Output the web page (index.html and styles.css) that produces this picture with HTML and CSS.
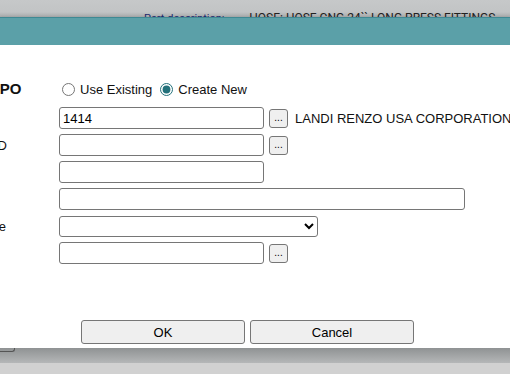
FILE: index.html
```html
<!DOCTYPE html>
<html lang="en">

<head>
    <meta charset="UTF-8">
    <meta name="viewport" content="width=device-width, initial-scale=1.0">
    <title>Create PO</title>
    <link rel="stylesheet" href="styles.css">
</head>

<body>
    <div class="page-top">
        <span class="part-label">Part description:</span>
        <span class="part-value">HOSE: HOSE CNG 24`` LONG PRESS FITTINGS</span>
    </div>

    <div class="dialog">
        <div class="titlebar"></div>
        <div class="dialog-body">
            <div class="form">
                <div class="label title">Create PO</div>
                <div class="field radios">
                    <input type="radio" name="mode" id="existing">
                    <label for="existing">Use Existing</label>
                    <input type="radio" name="mode" id="new" checked>
                    <label for="new">Create New</label>
                </div>

                <div class="label">Vendor</div>
                <div class="field">
                    <input type="text" class="txt" value="1414">
                    <button class="dots">...</button>
                    <span class="vendor-name">LANDI RENZO USA CORPORATION</span>
                </div>

                <div class="label">Vendor ID</div>
                <div class="field">
                    <input type="text" class="txt">
                    <button class="dots">...</button>
                </div>

                <div class="label">PO #</div>
                <div class="field">
                    <input type="text" class="txt">
                </div>

                <div class="label">Notes</div>
                <div class="field">
                    <input type="text" class="txt wide">
                </div>

                <div class="label">Ship Date</div>
                <div class="field">
                    <select class="sel">
                        <option></option>
                    </select>
                </div>

                <div class="label">Buyer</div>
                <div class="field">
                    <input type="text" class="txt">
                    <button class="dots">...</button>
                </div>
            </div>

            <div class="actions">
                <button class="btn">OK</button>
                <button class="btn">Cancel</button>
            </div>
        </div>
    </div>

    <div class="page-bottom">
        <div class="ghost-btn"></div>
    </div>
</body>

</html>
```

FILE: styles.css
```css
* {
    margin: 0;
    padding: 0;
    box-sizing: border-box;
}

html,
body {
    height: 100%;
    width: 100%;
    overflow: hidden;
}

body {
    background: #d1d1d1;
    font-family: "Liberation Sans", Arial, sans-serif;
    font-size: 13px;
    color: #111;
}

.page-top {
    height: 17px;
    overflow: hidden;
    background: linear-gradient(#c6c8c9, #c2c4c5 70%, #a9abac);
    padding-top: 10px;
    white-space: nowrap;
    font-family: Roboto, "Liberation Sans", sans-serif;
}

.part-label {
    display: inline-block;
    width: 102px;
    margin-left: 144px;
    font-size: 11px;
    color: #1d2a6e;
}

.part-value {
    font-size: 12px;
    color: #222;
}

.dialog {
    width: 100%;
    box-shadow: 0 2px 4px rgba(0, 0, 0, 0.35);
    position: relative;
}

.titlebar {
    height: 28px;
    background: #5ba0a8;
    border-top: 1px solid #3f8993;
}

.dialog-body {
    height: 303px;
    background: #fff;
    display: flex;
    flex-direction: column;
    padding-top: 33px;
    padding-bottom: 4px;
}

.form {
    display: grid;
    grid-template-columns: 110px 1fr;
    grid-template-rows: 24px;
    grid-auto-rows: 22px;
    row-gap: 5px;
    margin-left: -51px;
    align-items: center;
}

.form .title,
.form .radios {
    align-self: start;
    height: 22px;
}

.label {
    white-space: nowrap;
}

.label.title {
    font-size: 15px;
    font-weight: bold;
    line-height: 22px;
}

.field {
    display: flex;
    align-items: center;
    white-space: nowrap;
}

.radios input {
    width: 13px;
    height: 13px;
    margin: 0 5px 0 3px;
    accent-color: #23717b;
}

.radios input + label + input {
    margin-left: 8px;
}

.txt {
    width: 205px;
    height: 22px;
    border: 1px solid #767676;
    border-radius: 3px;
    padding: 0 3px;
    font: 13px "Liberation Sans", Arial, sans-serif;
    color: #000;
}

.txt.wide {
    width: 406px;
}

.sel {
    width: 259px;
    height: 21px;
    border: 1px solid #767676;
    border-radius: 3px;
    background: #fff;
    font: 13px "Liberation Sans", Arial, sans-serif;
}

.dots {
    width: 19px;
    height: 19px;
    margin-left: 5px;
    border: 1px solid #767676;
    border-radius: 3px;
    background: #efefef;
    font: 10px "Liberation Sans", Arial, sans-serif;
    line-height: 14px;
    color: #000;
}

.vendor-name {
    margin-left: 7px;
}

.actions {
    margin-top: auto;
    padding-left: 81px;
    display: flex;
    gap: 5px;
}

.btn {
    width: 164px;
    height: 24px;
    border: 1px solid #767676;
    border-radius: 3px;
    background: #efefef;
    font: 13px "Liberation Sans", Arial, sans-serif;
    color: #000;
}

.page-bottom {
    height: 15px;
    background: linear-gradient(#8f9293, #b5b7b8);
    position: relative;
}

.ghost-btn {
    width: 15px;
    height: 4px;
    border: 1px solid #555;
    border-top: none;
    border-left: none;
    border-radius: 0 0 3px 0;
}
```
